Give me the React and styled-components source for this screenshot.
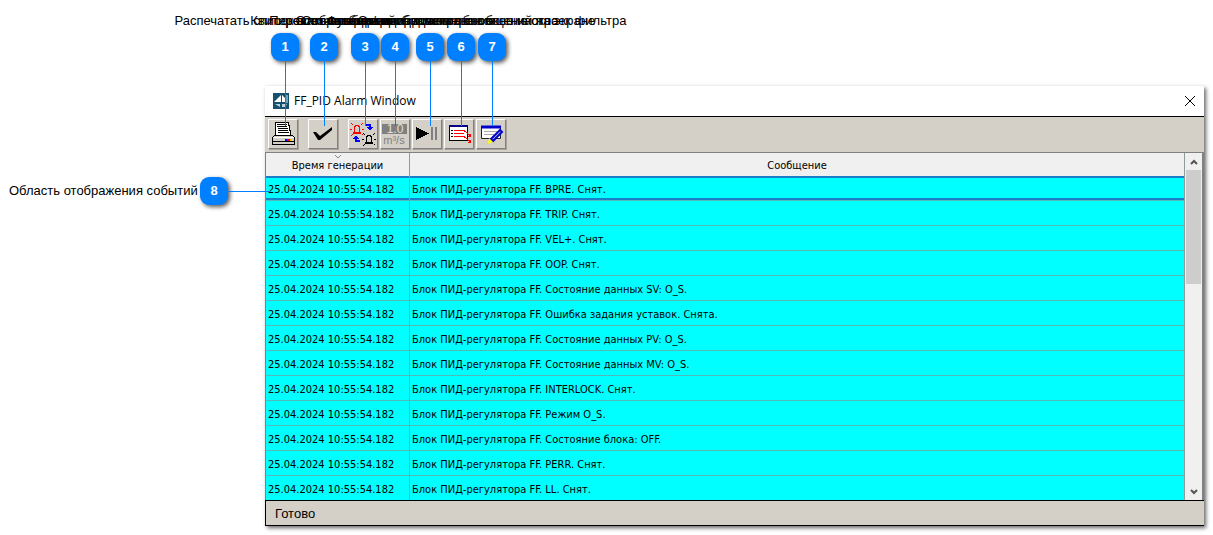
import React from "react";
import styled, { createGlobalStyle, css } from "styled-components";

const GlobalStyle = createGlobalStyle`
  * { box-sizing: border-box; }
  body {
    margin: 0;
    background: #fff;
    color: #000;
    font-family: "Liberation Sans", Arial, sans-serif;
  }
`;

const Figure = styled.main`
  position: relative;
  display: flex;
  align-items: flex-start;
  padding: 86px 9px 9px 0;
`;

const Badge = styled.span`
  flex: none;
  display: flex;
  align-items: center;
  justify-content: center;
  width: 28px;
  height: 28px;
  border-radius: 9px;
  background: #0080ff;
  color: #fff;
  font-size: 13px;
  font-weight: bold;
  line-height: 16px;
  box-shadow: 2px 2px 4px rgba(0, 0, 0, 0.65);
`;

const Caption = styled.span`
  font-size: 13px;
  line-height: 16px;
  white-space: nowrap;
`;

const Callout = styled.div`
  position: absolute;
  z-index: 2;
  top: 13px;
  left: ${(p) => p.$x}px;
  width: 28px;
  display: flex;
  flex-direction: column;
  align-items: center;
  pointer-events: none;

  ${Badge} { margin-top: 4px; }
`;

const Stem = styled.span`
  width: 1px;
  height: 65px;
  background: #0080ff;
`;

const SideCallout = styled.div`
  flex: none;
  display: flex;
  align-items: center;
  width: 265px;
  padding-left: 9px;
  margin-top: 91px;

  ${Badge} { margin-left: auto; }
`;

const SideLine = styled.span`
  position: relative;
  z-index: 2;
  flex: none;
  width: 42px;
  height: 1px;
  margin-right: -5px;
  background: #0080ff;
`;

const Window = styled.section`
  flex: 1;
  min-width: 0;
  background: #d4d0c8;
  box-shadow: 2px 2px 4px rgba(0, 0, 0, 0.6);
`;

const TitleBar = styled.header`
  display: flex;
  align-items: center;
  gap: 5px;
  height: 31px;
  padding: 0 8px;
  background: #fff;
  border-bottom: 1px solid #000;
`;

const Title = styled.h1`
  flex: 1;
  margin: 0;
  font: 12px/16px "Open Sans", "Noto Sans", sans-serif;
`;

const CloseButton = styled.button`
  display: flex;
  padding: 0;
  border: 0;
  background: none;
`;

const Toolbar = styled.div`
  display: flex;
  gap: 10px;
  height: 35px;
  padding: 2px 3px;
`;

const ButtonGroup = styled.div`
  display: flex;
  gap: 2px;
`;

const ToolButton = styled.button`
  display: flex;
  width: 30px;
  height: 30px;
  padding: 0;
  background: #d4d0c8;
  border: 1px solid;
  border-color: #fff #808080 #808080 #fff;
  box-shadow: 1px 1px 0 #a8a49c;
`;

const Content = styled.div`
  display: flex;
  border: solid #808080;
  border-width: 1px 2px 0 1px;
`;

const EventTable = styled.table`
  flex: 1;
  width: 100%;
  min-width: 0;
  table-layout: fixed;
  border-collapse: separate;
  border-spacing: 0;
  font: 11px/16px "DejaVu Sans Condensed", "DejaVu Sans", sans-serif;
`;

const cell = css`
  border-right: 1px solid #8c9c9c;
  overflow: hidden;
  white-space: nowrap;
`;

const HeadCell = styled.th`
  ${cell}
  position: relative;
  height: 23px;
  padding: 2px 0 0;
  background: #f0f0f0;
  font-weight: normal;
`;

const SortMark = styled.svg`
  position: absolute;
  top: 1px;
  left: 50%;
  margin-left: -4px;
`;

const Cell = styled.td`
  ${cell}
  height: 25px;
  padding: 3px 2px 0;
  background: #0ff;
  border-bottom: 1px solid #52b8b8;
`;

const Row = styled.tr`
  &:last-child ${Cell} { height: 24px; border-bottom: 0; }
  ${(p) => p.$selected && css`
    ${Cell} { box-shadow: inset 0 2px #1a7fc8, inset 0 -2px #1a7fc8; }
  `}
`;

const ScrollBar = styled.div`
  flex: none;
  display: flex;
  flex-direction: column;
  width: 17px;
  padding: 0 1px;
  background: #f0f0f0;
`;

const ScrollButton = styled.button`
  display: flex;
  align-items: center;
  justify-content: center;
  height: 17px;
  padding: 0;
  border: 0;
  background: none;
`;

const Track = styled.div`
  flex: 1;
`;

const Thumb = styled.div`
  height: 114px;
  background: #cdcdcd;
`;

const StatusBar = styled.footer`
  height: 26px;
  padding: 5px 9px;
  border: solid #000;
  border-width: 1px 0 1px 1px;
  font-size: 13px;
  line-height: 16px;
`;

const Icon = ({ children, crisp }) => (
  <svg width="28" height="28" viewBox="0 0 28 28" aria-hidden="true" shapeRendering={crisp ? "crispEdges" : "auto"}>
    {children}
  </svg>
);

const PrintIcon = () => (
  <Icon crisp>
    <path d="M6.500 2.500h13v3h1v5h1v5h-15z" fill="#fff" stroke="#000" />
    <path d="M8 4.500h10M8 6.500h10M9 8.500h10M9 10.500h10M9 12.500h11" stroke="#000" />
    <path d="M5.500 15.500h18l2 2v7h-22v-7z" fill="#d4d0c8" stroke="#000" />
    <path d="M5 17.500h20" stroke="#fff" />
    <path d="M4 21.500h21" stroke="#000" />
    <path d="M16 19.500h2" stroke="#00f" strokeWidth="2" />
    <path d="M18 19.500h3" stroke="#f00" strokeWidth="2" />
    <path d="M21 19.500h2" stroke="#fc0" strokeWidth="2" />
  </Icon>
);

const CheckIcon = () => (
  <Icon>
    <path d="M4 12l3 0 4 4L23 7v3L11 20H9z" fill="#000" />
  </Icon>
);

const Lamp = ({ color, x, y }) => (
  <g transform={`translate(${x} ${y})`} stroke={color} fill="none">
    <path d="M.5 7.500v-6h1v-1h3v1h1v6M-1 7.500h8M-1 8.500h8" />
    <path d="M-4 4.500h2M8 4.500h2" />
    <path d="M-3-2h1v1h1v1h-1v-1h-1zM8-2h1v1h-1v1h-1v-1h1zM-3 10h1v-1h1v1h-1v1h-1zM8 9h1v1h-1z" fill={color} stroke="none" />
  </g>
);

const AcknowledgeIcon = () => (
  <Icon crisp>
    <Lamp color="#f00" x={5} y={5} />
    <Lamp color="#000" x={17} y={15} />
    <path d="M16 5h5v3M11 21H7v-3" fill="none" stroke="#00f" strokeWidth="2" />
    <path d="M18 7h6l-3 4zM4 19h6l-3-4z" fill="#00f" />
  </Icon>
);

const UnitsIcon = () => (
  <Icon>
    <path d="M1 4h25v10H1z" fill="#808080" />
    <text x="14" y="13" textAnchor="middle" fontFamily="Liberation Sans, sans-serif" fontSize="12" fill="#e4e0d8">1.0</text>
    <text x="13" y="24" textAnchor="middle" fontFamily="Liberation Sans, sans-serif" fontSize="11" fill="#808080">m³/s</text>
  </Icon>
);

const PlayPauseIcon = () => (
  <Icon crisp>
    <path d="M3 7l13 6.500L3 20z" fill="#000" />
    <path d="M18 7h2v13h-2zM22 7h2v13h-2z" fill="#808080" />
  </Icon>
);

const ListIcon = () => (
  <Icon crisp>
    <path d="M4.500 5.500h18v15h-18z" fill="#fff" stroke="#000" />
    <path d="M4 6h19" stroke="#008" strokeWidth="2" />
    <path d="M6 10.500h2M6 13.500h2M6 16.500h2" stroke="#000" />
    <path d="M9 10.500h10l6 5M9 13.500h10M9 16.500h10l6 5" fill="none" stroke="#f00" />
    <path d="M26 13v4h-4zM26 19v4h-4z" fill="#f00" />
  </Icon>
);

const FilterIcon = () => (
  <Icon>
    <path d="M4.500 6.500h19v12h-19z" fill="#fff" stroke="#222" />
    <path d="M4 7h20" stroke="#00c" strokeWidth="3" />
    <path d="M7 11.500h13M7 14.500h10" stroke="#aaa" />
    <path d="M23 10l2 2-9 9-2-2z" fill="#b8c8f0" stroke="#00c" strokeWidth="2" />
    <path d="M12 18l4 4-5 2z" fill="#ff0" />
  </Icon>
);

const Chevron = ({ up }) => (
  <svg width="8" height="6" viewBox="0 0 8 6" aria-hidden="true">
    <path d={up ? "M1 5l3-3 3 3" : "M1 1l3 3 3-3"} fill="none" stroke="#555" strokeWidth="2" />
  </svg>
);

const callouts = [
  { x: 271, text: "Распечатать список всех сообщений" },
  { x: 310, text: "Квитировать сообщения" },
  { x: 351, text: "Переключить режим просмотра" },
  { x: 381, text: "Отображение единиц измерения" },
  { x: 416, text: "Остановить/возобновить обновление окна" },
  { x: 447, text: "Функция отображения сообщений на экране" },
  { x: 478, text: "Открыть диалоговое окно настроек фильтра" },
];

const events = [
  "BPRE. Снят.",
  "TRIP. Снят.",
  "VEL+. Снят.",
  "OOP. Снят.",
  "Состояние данных SV: O_S.",
  "Ошибка задания уставок. Снята.",
  "Состояние данных PV: O_S.",
  "Состояние данных MV: O_S.",
  "INTERLOCK. Снят.",
  "Режим O_S.",
  "Состояние блока: OFF.",
  "PERR. Снят.",
  "LL. Снят.",
];

export default function App() {
  return (
    <Figure>
      <GlobalStyle />
      {callouts.map((c, i) => (
        <Callout key={c.x} $x={c.x}>
          <Caption>{c.text}</Caption>
          <Badge>{i + 1}</Badge>
          <Stem />
        </Callout>
      ))}
      <SideCallout>
        <Caption>Область отображения событий</Caption>
        <Badge>8</Badge>
        <SideLine />
      </SideCallout>
      <Window>
        <TitleBar>
          <svg width="16" height="16" viewBox="0 0 16 16" aria-hidden="true">
            <path d="M0 0h16v16H0z" fill="#17506f" />
            <path d="M1 9l7-7v7zM9 2l3 3v4H9z" fill="#fff" />
            <path d="M13 2h2v8h-2z" fill="#6fa3bd" />
            <path d="M2 11h5v3zM9 11h5l-2 3H9z" fill="#b9d3df" />
          </svg>
          <Title>FF_PID Alarm Window</Title>
          <CloseButton aria-label="Закрыть">
            <svg width="12" height="12" viewBox="0 0 12 12" aria-hidden="true">
              <path d="M1 1l10 10M11 1L1 11" stroke="#000" />
            </svg>
          </CloseButton>
        </TitleBar>
        <Toolbar>
          <ToolButton aria-label="Распечатать"><PrintIcon /></ToolButton>
          <ToolButton aria-label="Квитировать"><CheckIcon /></ToolButton>
          <ButtonGroup>
            <ToolButton aria-label="Переключить"><AcknowledgeIcon /></ToolButton>
            <ToolButton aria-label="Единицы"><UnitsIcon /></ToolButton>
            <ToolButton aria-label="Пауза"><PlayPauseIcon /></ToolButton>
            <ToolButton aria-label="Сообщения"><ListIcon /></ToolButton>
            <ToolButton aria-label="Фильтр"><FilterIcon /></ToolButton>
          </ButtonGroup>
        </Toolbar>
        <Content>
          <EventTable>
            <colgroup>
              <col style={{ width: 144 }} />
              <col />
            </colgroup>
            <thead>
              <tr>
                <HeadCell scope="col">
                  <SortMark width="8" height="5" viewBox="0 0 8 5" aria-hidden="true">
                    <path d="M1 1l3 3 3-3" fill="none" stroke="#888" />
                  </SortMark>
                  Время генерации
                </HeadCell>
                <HeadCell scope="col">Сообщение</HeadCell>
              </tr>
            </thead>
            <tbody>
              {events.map((text, i) => (
                <Row key={text} $selected={i === 0}>
                  <Cell>25.04.2024 10:55:54.182</Cell>
                  <Cell>Блок ПИД-регулятора FF. {text}</Cell>
                </Row>
              ))}
            </tbody>
          </EventTable>
          <ScrollBar>
            <ScrollButton aria-label="Вверх"><Chevron up /></ScrollButton>
            <Track><Thumb /></Track>
            <ScrollButton aria-label="Вниз"><Chevron /></ScrollButton>
          </ScrollBar>
        </Content>
        <StatusBar>Готово</StatusBar>
      </Window>
    </Figure>
  );
}
